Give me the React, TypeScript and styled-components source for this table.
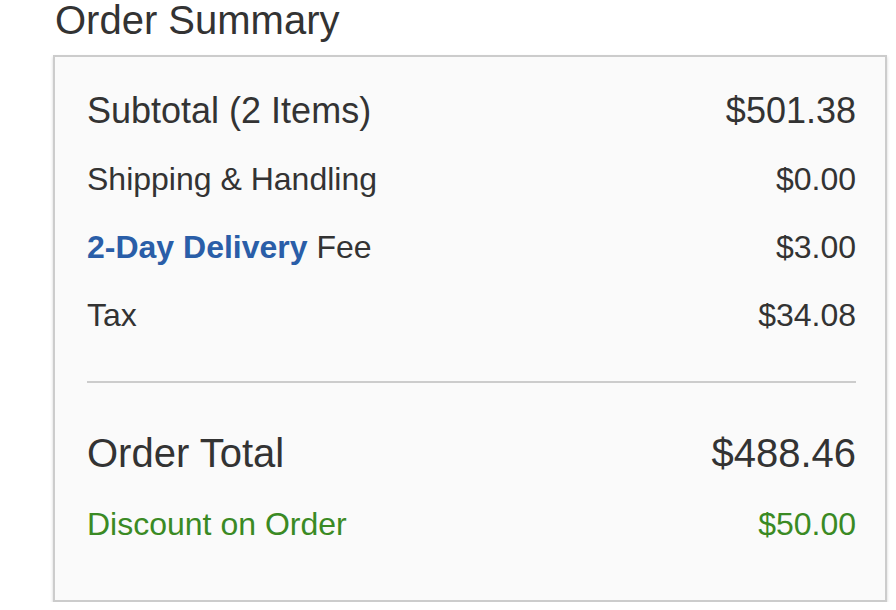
import React from "react";
import styled, { createGlobalStyle } from "styled-components";

const Global = createGlobalStyle`
  html, body { margin: 0; padding: 0; background: #ffffff; }
  body { font-family: "Liberation Sans", Arial, Helvetica, sans-serif; color: #333333; }
`;

const Page = styled.div`
  padding-left: 53px;
  width: 834px;
`;

const Title = styled.h2`
  margin: 0 0 15px 0;
  padding-left: 2px;
  font-size: 40px;
  line-height: 40px;
  font-weight: 400;
  color: #333333;
`;

const Card = styled.section`
  background: #fafafa;
  border: 2px solid #cccccc;
  box-shadow: 0 2px 3px rgba(0, 0, 0, 0.18);
  padding: 20px 29px 42px 32px;
  display: flex;
  flex-direction: column;
`;

const Row = styled.div<{ $size: number; $lh?: number; $color?: string; $mt?: number }>`
  display: flex;
  justify-content: space-between;
  align-items: baseline;
  font-size: ${(p) => p.$size}px;
  line-height: ${(p) => p.$lh ?? 68}px;
  color: ${(p) => p.$color ?? "#333333"};
  margin-top: ${(p) => p.$mt ?? 0}px;
`;

const Highlight = styled.span`
  color: #2a5ea8;
  font-weight: 700;
`;

const Divider = styled.hr`
  border: none;
  height: 2px;
  background: #cccccc;
  margin: 32px 0 36px 0;
`;

export default function App() {
  return (
    <>
      <Global />
      <Page>
        <Title>Order Summary</Title>
        <Card>
          <Row $size={36}>
            <span>Subtotal (2 Items)</span>
            <span>$501.38</span>
          </Row>
          <Row $size={32}>
            <span>Shipping &amp; Handling</span>
            <span>$0.00</span>
          </Row>
          <Row $size={32}>
            <span>
              <Highlight>2-Day Delivery</Highlight> Fee
            </span>
            <span>$3.00</span>
          </Row>
          <Row $size={32}>
            <span>Tax</span>
            <span>$34.08</span>
          </Row>
          <Divider />
          <Row $size={40}>
            <span>Order Total</span>
            <span>$488.46</span>
          </Row>
          <Row $size={32} $color="#3a8a24" $mt={3}>
            <span>Discount on Order</span>
            <span>$50.00</span>
          </Row>
        </Card>
      </Page>
    </>
  );
}
